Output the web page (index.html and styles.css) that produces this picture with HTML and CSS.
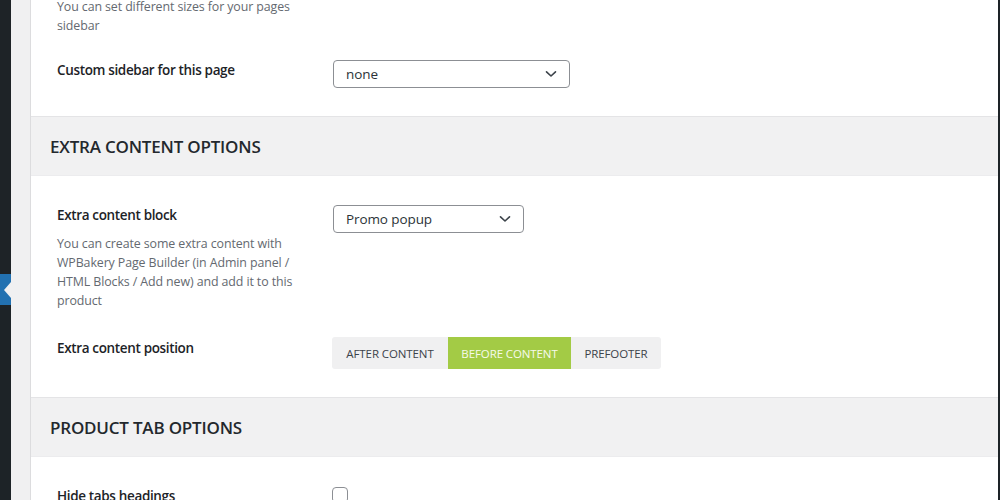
FILE: index.html
```html
<!DOCTYPE html>
<html>
<head>
<meta charset="utf-8">
<link rel="stylesheet" href="styles.css">
</head>
<body>
<div class="screen">
  <div class="adminmenu">
    <div class="menu-top"></div>
    <div class="menu-current"><span class="menu-arrow"></span></div>
    <div class="menu-bottom"></div>
  </div>
  <div class="gutter"></div>
  <div class="panel">
    <div class="section-body first">
      <div class="row row-top">
        <div class="label-col">
          <p class="desc">You can set different sizes for your pages sidebar</p>
        </div>
      </div>
      <div class="row">
        <div class="label-col">
          <div class="label">Custom sidebar for this page</div>
        </div>
        <div class="field-col">
          <div class="select select-wide">
            <span>none</span>
            <svg class="chev" width="12" height="8" viewBox="0 0 12 8"><path d="M1.5 1.8 L6 6 L10.5 1.8" fill="none" stroke="#3c434a" stroke-width="1.6" stroke-linecap="round" stroke-linejoin="round"/></svg>
          </div>
        </div>
      </div>
    </div>

    <div class="section-head">EXTRA CONTENT OPTIONS</div>
    <div class="section-body">
      <div class="row">
        <div class="label-col">
          <div class="label">Extra content block</div>
          <p class="desc desc-under">You can create some extra content with WPBakery Page Builder (in Admin panel / HTML Blocks / Add new) and add it to this product</p>
        </div>
        <div class="field-col">
          <div class="select select-mid">
            <span>Promo popup</span>
            <svg class="chev" width="12" height="8" viewBox="0 0 12 8"><path d="M1.5 1.8 L6 6 L10.5 1.8" fill="none" stroke="#3c434a" stroke-width="1.6" stroke-linecap="round" stroke-linejoin="round"/></svg>
          </div>
        </div>
      </div>
      <div class="row">
        <div class="label-col">
          <div class="label">Extra content position</div>
        </div>
        <div class="field-col">
          <div class="btn-group">
            <span class="btn b1">AFTER CONTENT</span>
            <span class="btn b2 active">BEFORE CONTENT</span>
            <span class="btn b3">PREFOOTER</span>
          </div>
        </div>
      </div>
    </div>

    <div class="section-head">PRODUCT TAB OPTIONS</div>
    <div class="section-body">
      <div class="row">
        <div class="label-col">
          <div class="label">Hide tabs headings</div>
        </div>
        <div class="field-col">
          <span class="checkbox"></span>
        </div>
      </div>
    </div>
  </div>
  <div class="edge"></div>
</div>
</body>
</html>
```

FILE: styles.css
```css
html, body {
  margin: 0;
  padding: 0;
  width: 1000px;
  height: 500px;
  overflow: hidden;
  background: #f0f0f1;
}

.screen {
  display: flex;
  width: 1000px;
  height: 500px;
  font-family: "Open Sans", "Noto Sans", sans-serif;
  color: #1d2327;
}

.adminmenu {
  width: 11px;
  flex: none;
  display: flex;
  flex-direction: column;
  background: #1d2327;
}

.menu-top {
  height: 274px;
  background: #1e2327;
}

.menu-current {
  height: 31px;
  background: #2271b1;
  position: relative;
}

.menu-arrow {
  position: absolute;
  right: 0;
  top: 8px;
  width: 0;
  height: 0;
  border-top: 8px solid transparent;
  border-bottom: 8px solid transparent;
  border-right: 7px solid #f0f0f1;
}

.menu-bottom {
  flex: 1;
  background: #1d2327;
}

.gutter {
  width: 19px;
  flex: none;
  background: #f0f0f1;
}

.panel {
  flex: 1;
  background: #fff;
  border-left: 1px solid #dcdcde;
  overflow: hidden;
}

.edge {
  width: 2px;
  flex: none;
  background: #1d2327;
}

.section-body {
  padding: 15px 0 14px;
}

.section-body.first {
  padding-top: 0;
}

.row {
  display: flex;
  padding: 14px 0;
}

.row-top {
  padding-top: 0;
  margin-top: -2px;
  padding-bottom: 11px;
}

.label-col {
  width: 276px;
  padding-left: 26px;
  flex: none;
}

.field-col {
  flex: 1;
}

.label {
  font-size: 13.5px;
  font-weight: 600;
  line-height: 20px;
  margin-top: 0;
  color: #1d2327;
  letter-spacing: -0.35px;
}

.desc {
  margin: 0;
  width: 236px;
  font-size: 12.4px;
  line-height: 18.7px;
  color: #646970;
  letter-spacing: -0.1px;
}

.desc-under {
  margin-top: 10px;
}

.select {
  box-sizing: border-box;
  height: 28px;
  border: 1px solid #8c8f94;
  border-radius: 4px;
  background: #fff;
  display: flex;
  align-items: center;
  justify-content: space-between;
  padding: 0 12px 0 12px;
  font-size: 13.5px;
  color: #2c3338;
  letter-spacing: -0.1px;
}

.select-wide {
  width: 237px;
}

.select-mid {
  width: 191px;
}

.chev {
  display: block;
}

.btn-group {
  display: inline-flex;
  height: 32px;
  background: #f0f0f1;
  border-radius: 3px;
  margin-top: -1px;
  margin-left: -1px;
}

.btn {
  display: flex;
  align-items: center;
  justify-content: center;
  font-size: 11.5px;
  font-weight: 500;
  color: #3c434a;
  letter-spacing: -0.1px;
}

.b1 { width: 116px; }
.b2 { width: 123px; }
.b3 { width: 90px; }

.btn.active {
  background: #a3cb45;
  color: #f7faeb;
}

.section-head {
  box-sizing: border-box;
  height: 60px;
  background: #f1f1f2;
  border-top: 1px solid #e4e4e6;
  border-bottom: 1px solid #ececee;
  display: flex;
  align-items: center;
  padding-left: 19px;
  font-size: 17px;
  font-weight: 600;
  color: #23282d;
  letter-spacing: -0.2px;
}

.checkbox {
  display: block;
  box-sizing: border-box;
  width: 16px;
  height: 16px;
  border: 1px solid #8c8f94;
  border-radius: 4px;
  margin-top: 1px;
  margin-left: -1px;
  background: #fff;
}
```
